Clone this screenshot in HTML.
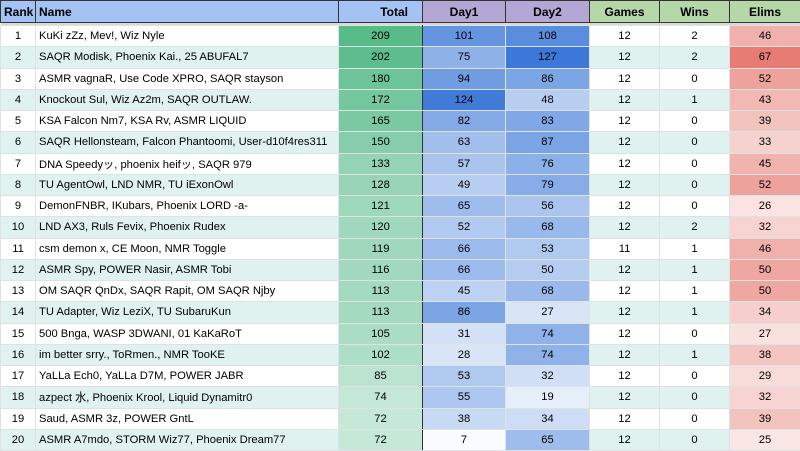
<!DOCTYPE html>
<html><head><meta charset="utf-8"><style>
body{margin:0;width:800px;height:450px;overflow:hidden;background:#fff;font-family:"Liberation Sans","Noto Sans CJK JP",sans-serif;font-size:12px;color:#000}
table{border-collapse:collapse;table-layout:fixed;width:800px}
td,th{height:21.25px;padding:0 3px;border:1px solid #dde3e3;white-space:nowrap;overflow:hidden;box-sizing:border-box}
td{font-size:11.2px}
th{height:22px;font-weight:bold;border:1px solid #333;font-size:12px}
tr.sep td{height:3px;padding:0;background:#d9d9d9;border:none}
td.c{text-align:center}td.r{text-align:center;border-right:1px solid #333}
</style></head><body>
<table id="t">
<colgroup><col style="width:35px"><col style="width:303px"><col style="width:84px"><col style="width:83px"><col style="width:84px"><col style="width:70px"><col style="width:70px"><col style="width:71px"></colgroup>
<tr><th style="background:#a4c2f4">Rank</th><th style="background:#a4c2f4;text-align:left">Name</th><th style="background:#a4c2f4;text-align:right;padding-right:14px">Total</th><th style="background:#b4a7d6">Day1</th><th style="background:#b4a7d6">Day2</th><th style="background:#b6d7a8">Games</th><th style="background:#b6d7a8">Wins</th><th style="background:#b6d7a8">Elims</th></tr>
<tr class="sep"><td colspan="8"></td></tr>
</table>
<script>
var d=[["KuKi zZz, Mev!, Wiz Nyle",209,101,108,12,2,46],["SAQR Modisk, Phoenix Kai., 25 ABUFAL7",202,75,127,12,2,67],["ASMR vagnaR, Use Code XPRO, SAQR stayson",180,94,86,12,0,52],["Knockout Sul, Wiz Az2m, SAQR OUTLAW.",172,124,48,12,1,43],["KSA Falcon Nm7, KSA Rv, ASMR LIQUID",165,82,83,12,0,39],["SAQR Hellonsteam, Falcon Phantoomi, User-d10f4res311",150,63,87,12,0,33],["DNA Speedyッ, phoenix heifッ, SAQR 979",133,57,76,12,0,45],["TU AgentOwl, LND NMR, TU iExonOwl",128,49,79,12,0,52],["DemonFNBR, IKubars, Phoenix LORD -a-",121,65,56,12,0,26],["LND AX3, Ruls Fevix, Phoenix Rudex",120,52,68,12,2,32],["csm demon x, CE Moon, NMR Toggle",119,66,53,11,1,46],["ASMR Spy, POWER Nasir, ASMR Tobi",116,66,50,12,1,50],["OM SAQR QnDx, SAQR Rapit, OM SAQR Njby",113,45,68,12,1,50],["TU Adapter, Wiz LeziX, TU SubaruKun",113,86,27,12,1,34],["500 Bnga, WASP 3DWANI, 01 KaKaRoT",105,31,74,12,0,27],["im better srry., ToRmen., NMR TooKE",102,28,74,12,1,38],["YaLLa Ech0, YaLLa D7M, POWER JABR",85,53,32,12,0,29],["azpect 水, Phoenix Krool, Liquid Dynamitr0",74,55,19,12,0,32],["Saud, ASMR 3z, POWER GntL",72,38,34,12,0,39],["ASMR A7mdo, STORM Wiz77, Phoenix Dream77",72,7,65,12,0,25]];
function mix(c,v,lo,hi){var t=(v-lo)/(hi-lo);var w=[255,255,255];return"rgb("+c.map(function(x,i){return Math.round(w[i]+(x-w[i])*t)}).join(",")+")"}
var h="";d.forEach(function(r,i){var bg=i%2?"#e0f2ef":"#fff";
h+="<tr style='background:"+bg+"'><td class='c'>"+(i+1)+"</td><td>"+r[0]+"</td><td class='r' style='background:"+mix([87,187,138],r[1],0,209)+"'>"+r[1]+"</td><td class='c' style='background:"+mix([60,120,216],r[2],3,127)+"'>"+r[2]+"</td><td class='c' style='background:"+mix([60,120,216],r[3],3,127)+"'>"+r[3]+"</td><td class='c'>"+r[4]+"</td><td class='c'>"+r[5]+"</td><td class='c' style='background:"+mix([230,124,115],r[6],15,67)+"'>"+r[6]+"</td></tr>"});
document.getElementById("t").insertAdjacentHTML("beforeend",h);
</script>
</body></html>
